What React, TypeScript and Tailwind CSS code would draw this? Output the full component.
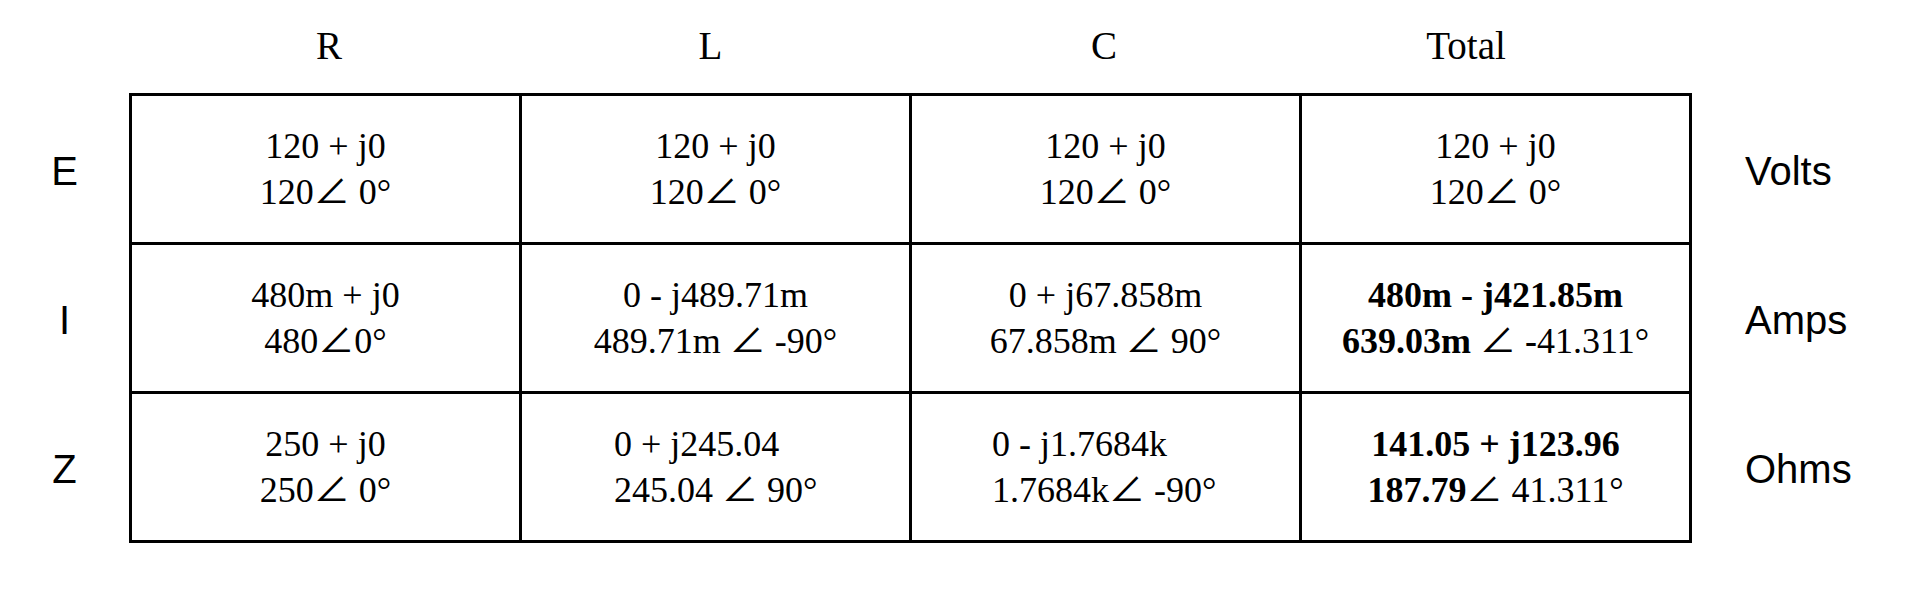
const serif = { fontFamily: '"Liberation Serif", "Times New Roman", serif' };
const sans = { fontFamily: '"Liberation Sans", Arial, sans-serif' };

type Cell = {
  top: React.ReactNode;
  bottom: React.ReactNode;
  align?: string;
};

// thin angle sign, Liberation Serif has no ∠ so pick a light face for it
function Ang() {
  return (
    <span
      className="font-normal"
      style={{ fontFamily: '"DejaVu Sans ExtraLight", "Noto Sans CJK JP", sans-serif' }}
    >
      ∠
    </span>
  );
}

const headers = [
  { t: 'R', cls: 'pl-[10px]' },
  { t: 'L', cls: 'pr-[7px]' },
  { t: 'C', cls: '' },
  { t: 'Total', cls: 'pr-[56px]' },
];

const rows: { label: string; unit: string; cells: Cell[] }[] = [
  {
    label: 'E',
    unit: 'Volts',
    cells: [
      { top: '120 + j0', bottom: <>120<Ang /> 0°</> },
      { top: '120 + j0', bottom: <>120<Ang /> 0°</> },
      { top: '120 + j0', bottom: <>120<Ang /> 0°</> },
      { top: '120 + j0', bottom: <>120<Ang /> 0°</> },
    ],
  },
  {
    label: 'I',
    unit: 'Amps',
    cells: [
      { top: '480m + j0', bottom: <>480<Ang />0°</> },
      { top: '0 - j489.71m', bottom: <>489.71m <Ang /> -90°</> },
      { top: '0 + j67.858m', bottom: <>67.858m <Ang /> 90°</> },
      {
        top: <b>480m - j421.85m</b>,
        bottom: (
          <>
            <b>639.03m</b> <Ang /> <b>-</b>41.311°
          </>
        ),
      },
    ],
  },
  {
    label: 'Z',
    unit: 'Ohms',
    cells: [
      { top: '250 + j0', bottom: <>250<Ang /> 0°</> },
      { top: '0 + j245.04', bottom: <>245.04 <Ang /> 90°</>, align: 'items-start pl-[92px]' },
      { top: '0 - j1.7684k', bottom: <>1.7684k<Ang /> -90°</>, align: 'items-start pl-[80px]' },
      {
        top: <b>141.05 + j123.96</b>,
        bottom: (
          <>
            <b>187.79</b>
            <Ang /> 41.311°
          </>
        ),
      },
    ],
  },
];

export default function App() {
  return (
    <div className="w-[1909px] h-[591px] bg-white text-black">
      {/* Column headers */}
      <div className="flex h-[93px] pl-[129px]" style={serif}>
        {headers.map((h) => (
          <div key={h.t} className={`w-[390px] text-center text-[39px] leading-none pt-[26px] ${h.cls}`}>
            {h.t}
          </div>
        ))}
      </div>

      <div className="flex">
        {/* Row labels */}
        <div className="w-[129px] pt-[3px] flex flex-col" style={sans}>
          {rows.map((r) => (
            <div key={r.label} className="h-[149px] flex items-center justify-center text-[40px]">
              {r.label}
            </div>
          ))}
        </div>

        {/* Table */}
        <div className="grid grid-cols-[repeat(4,390px)] border-l-[3px] border-t-[3px] border-black" style={serif}>
          {rows.map((r) =>
            r.cells.map((c, i) => (
              <div
                key={r.label + i}
                className={`h-[149px] border-r-[3px] border-b-[3px] border-black flex flex-col justify-center text-[36px] leading-[42px] ${c.align ?? 'items-center'}`}
              >
                <div className="whitespace-pre">{c.top}</div>
                <div className="whitespace-pre">{c.bottom}</div>
              </div>
            ))
          )}
        </div>

        {/* Units */}
        <div className="pl-[53px] pt-[3px] flex flex-col" style={sans}>
          {rows.map((r) => (
            <div key={r.unit} className="h-[149px] flex items-center text-[40px]">
              {r.unit}
            </div>
          ))}
        </div>
      </div>
    </div>
  );
}
